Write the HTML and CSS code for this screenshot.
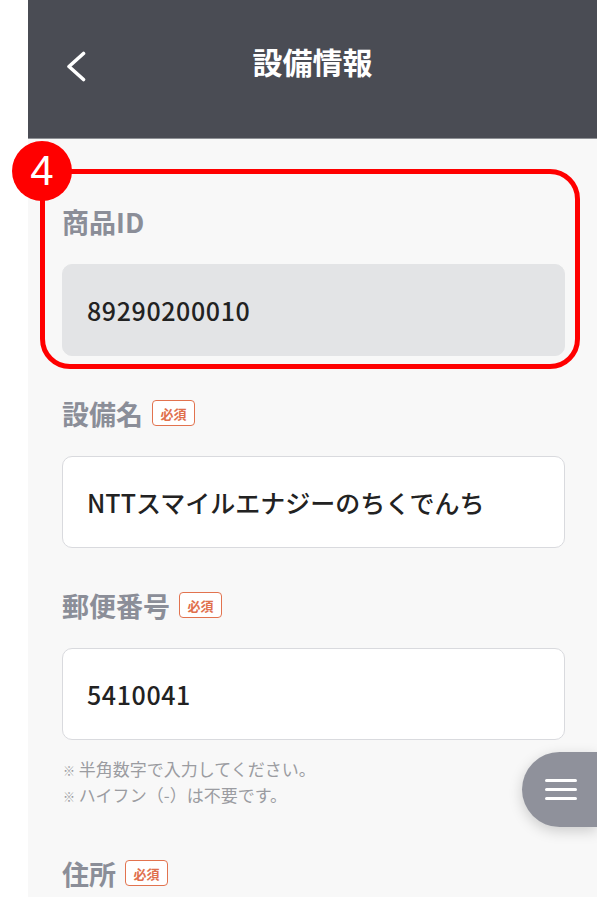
FILE: index.html
```
<!DOCTYPE html>
<html lang="ja">

<head>
    <meta charset="UTF-8">
    <meta name="viewport" content="width=device-width, initial-scale=1.0">
    <title>設備情報</title>
    <link rel="stylesheet" href="styles.css">
</head>

<body>
    <div class="app">
        <header class="header">
            <a class="back" href="#">
                <svg width="22" height="32" viewBox="0 0 22 32">
                    <polyline points="18.5,2.5 4,15.5 18.5,28.5" fill="none" stroke="#fff" stroke-width="3.6" stroke-linecap="round" stroke-linejoin="round" />
                </svg>
            </a>
            <h1 class="title">設備情報</h1>
            <div></div>
        </header>

        <main class="content">
            <div class="field field-mark">
                <div class="mark"></div>
                <div class="mark-num">4</div>
                <div class="label">商品ID</div>
                <div class="input input-disabled num">89290200010</div>
            </div>

            <div class="field">
                <div class="label">設備名<span class="req">必須</span></div>
                <div class="input">NTTスマイルエナジーのちくでんち</div>
            </div>

            <div class="field">
                <div class="label">郵便番号<span class="req">必須</span></div>
                <div class="input num">5410041</div>
                <p class="note"><small>※</small> 半角数字で入力してください。<br><small>※</small> ハイフン（-）は不要です。</p>
            </div>

            <div class="field field-last">
                <div class="label">住所<span class="req">必須</span></div>
            </div>
        </main>

        <div class="fab">
            <span></span>
            <span></span>
            <span></span>
        </div>
    </div>
</body>

</html>
```

FILE: styles.css
```
html,
body {
    margin: 0;
    padding: 0;
    background-color: #fff;
}

body {
    font-family: "Noto Sans CJK JP", "Noto Sans", sans-serif;
    height: 897px;
    overflow: hidden;
}

.app {
    margin-left: 28px;
    height: 897px;
    background-color: #f8f8f8;
}

/* ヘッダー */
.header {
    height: 139px;
    box-sizing: border-box;
    padding-top: 40px;
    background-color: #4a4c54;
    border-bottom: 1px solid #8e9095;
    display: grid;
    grid-template-columns: 1fr auto 1fr;
    align-items: start;
}

.back {
    display: block;
    width: 22px;
    height: 32px;
    margin-left: 37px;
    margin-top: 11px;
}

.back svg {
    display: block;
}

.title {
    margin: 0;
    color: #fff;
    font-size: 30px;
    line-height: 42px;
    font-weight: bold;
}

/* フォーム */
.content {
    padding: 64px 32px 0 34px;
}

.field {
    position: relative;
    margin-top: 39px;
}

.field:first-child {
    margin-top: 0;
}

.field-last {
    margin-top: 46px;
}

.label {
    display: flex;
    align-items: center;
    height: 36px;
    font-size: 27px;
    font-weight: bold;
    color: #8b8e98;
}

.req {
    display: inline-flex;
    align-items: center;
    justify-content: center;
    box-sizing: border-box;
    width: 43px;
    height: 26px;
    margin-left: 9px;
    border: 1.5px solid #e2734f;
    border-radius: 4px;
    background-color: #fff;
    color: #e0704d;
    font-size: 13px;
    font-weight: bold;
}

.input {
    box-sizing: border-box;
    height: 92px;
    margin-top: 25px;
    padding: 0 24px;
    display: flex;
    align-items: center;
    background-color: #fff;
    border: 1px solid #d9dade;
    border-radius: 10px;
    color: #222;
    font-size: 25px;
    font-weight: 500;
}

.num {
    letter-spacing: 0.6px;
}

.input-disabled {
    background-color: #e3e4e6;
    border-color: #e3e4e6;
}

.note {
    margin: 17px 0 0 1px;
    font-size: 17px;
    line-height: 24px;
    color: #9b9ca1;
}

.note small {
    font-size: 12px;
}

/* 注釈の赤枠 */
.mark {
    position: absolute;
    top: -34px;
    left: -22px;
    right: -15px;
    bottom: -13px;
    border: 5px solid #ff0000;
    border-radius: 30px;
}

.mark-num {
    position: absolute;
    top: -62px;
    left: -50px;
    width: 60px;
    height: 60px;
    border-radius: 50%;
    background-color: #ff0000;
    color: #fff;
    font-family: "Liberation Sans", sans-serif;
    font-size: 42px;
    line-height: 60px;
    text-align: center;
}

/* メニューボタン */
.fab {
    position: fixed;
    right: 0;
    top: 752px;
    width: 75px;
    height: 75px;
    box-sizing: border-box;
    padding-left: 23px;
    border-radius: 38px 0 0 38px;
    background-color: #8f919b;
    box-shadow: 0 4px 14px rgba(0, 0, 0, 0.18);
    display: flex;
    flex-direction: column;
    justify-content: center;
    gap: 6px;
}

.fab span {
    display: block;
    width: 32px;
    height: 3px;
    border-radius: 2px;
    background-color: #fff;
}
```
